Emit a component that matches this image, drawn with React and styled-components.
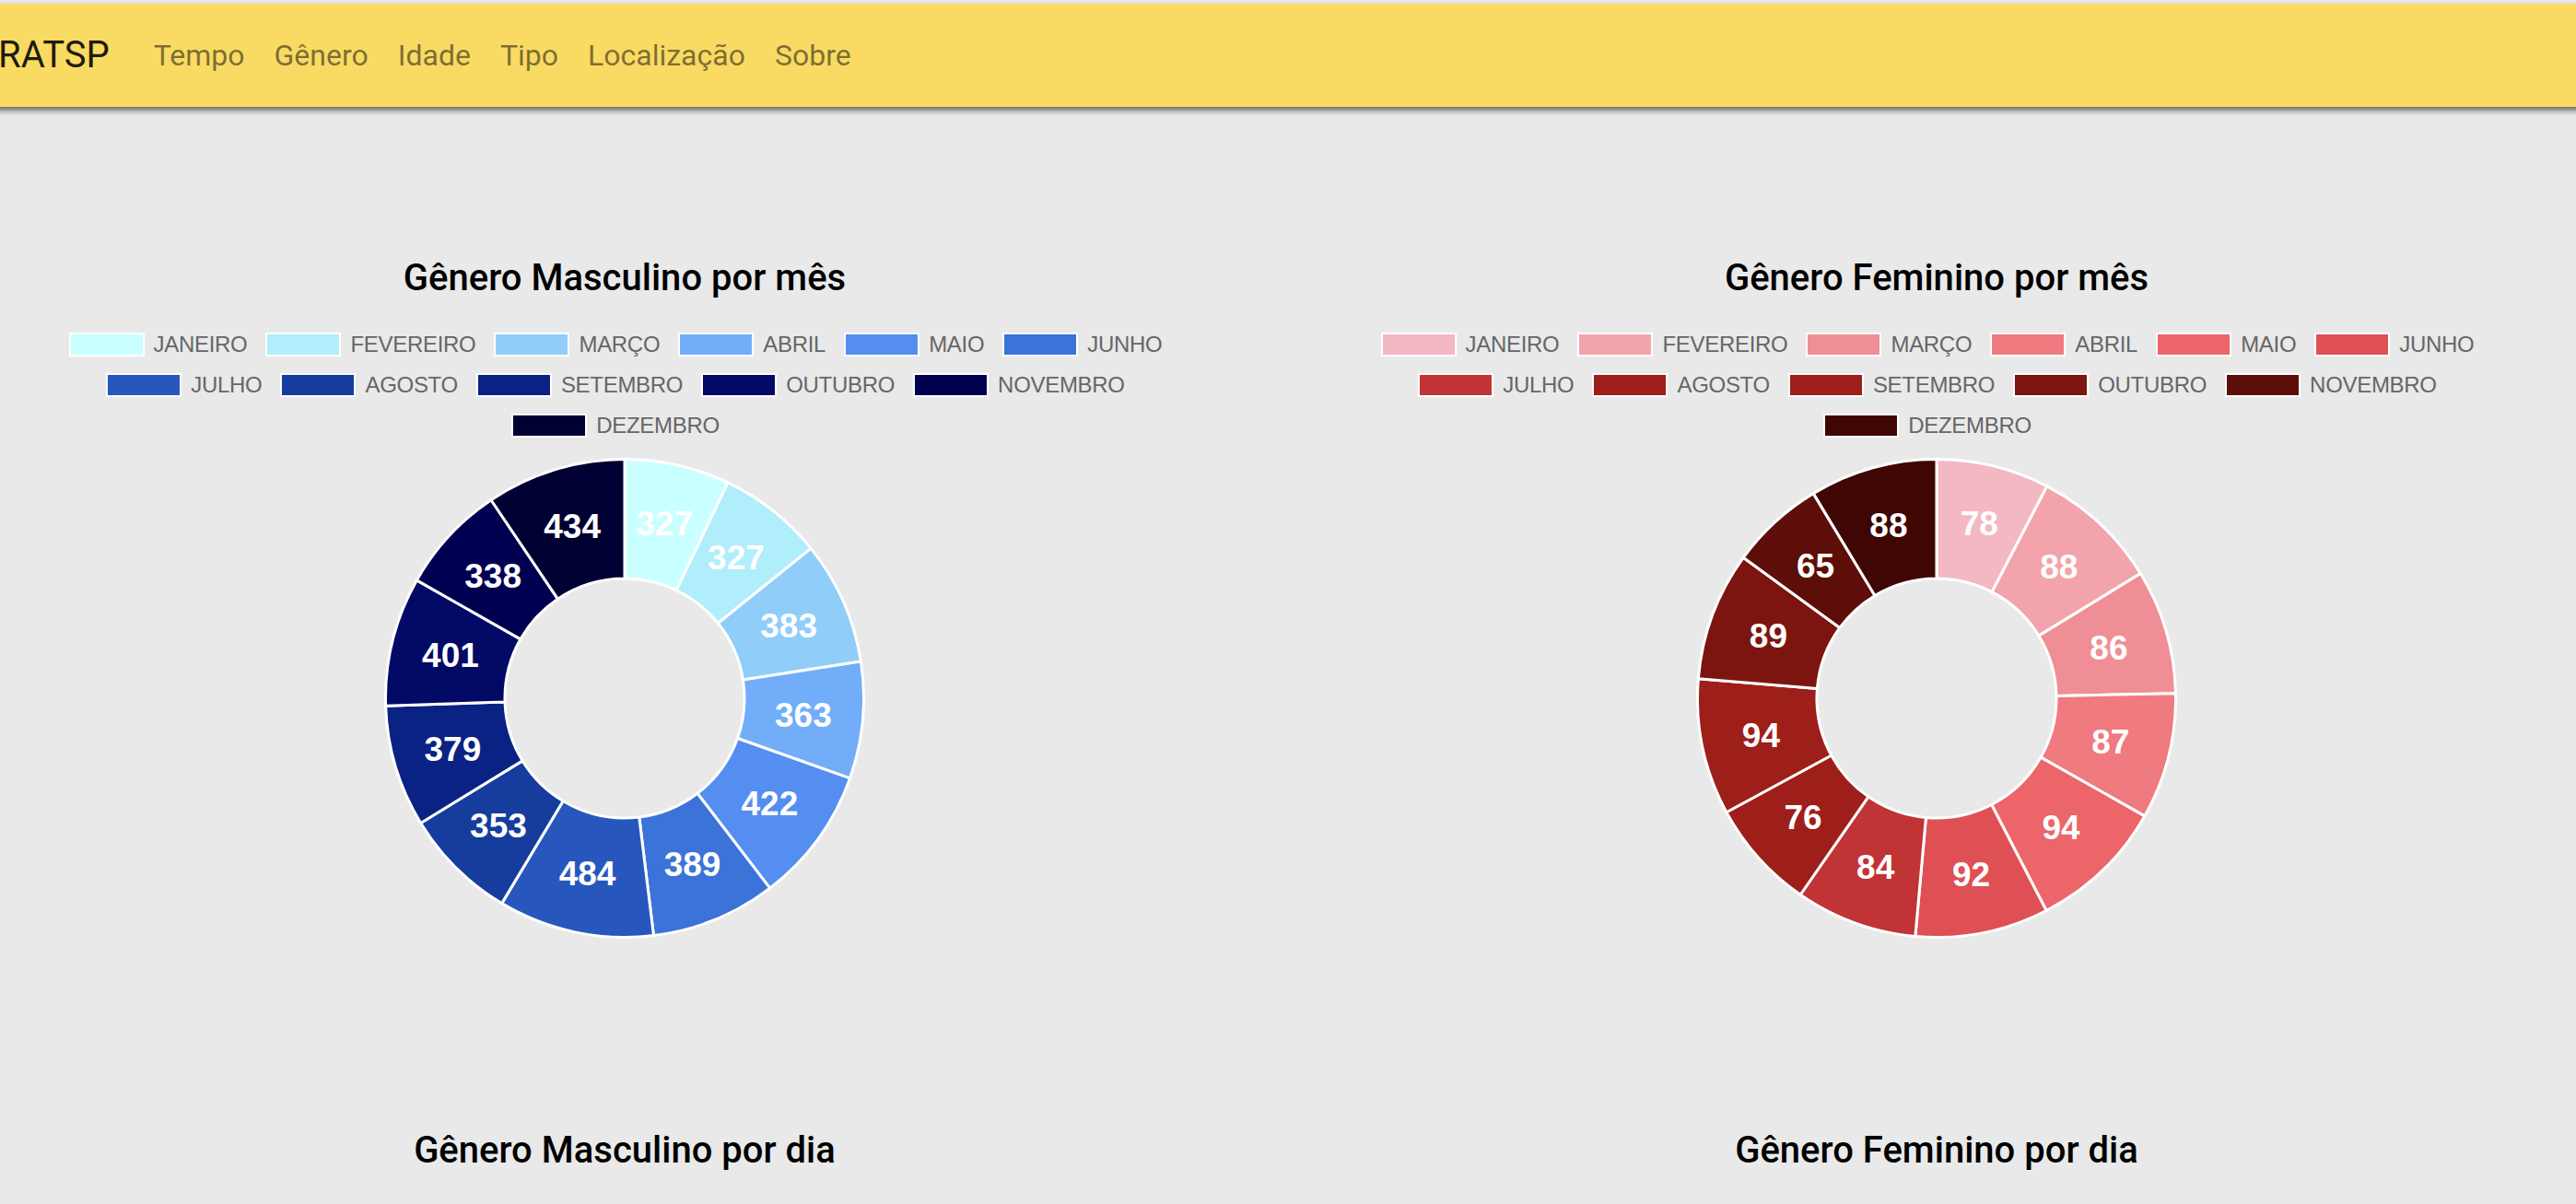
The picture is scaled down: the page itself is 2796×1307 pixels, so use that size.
import React from "react";
import styled, { createGlobalStyle } from "styled-components";

const MONTHS = [
  "JANEIRO",
  "FEVEREIRO",
  "MARÇO",
  "ABRIL",
  "MAIO",
  "JUNHO",
  "JULHO",
  "AGOSTO",
  "SETEMBRO",
  "OUTUBRO",
  "NOVEMBRO",
  "DEZEMBRO",
];

const DAYS = ["DOMINGO", "SEGUNDA", "TERÇA", "QUARTA", "QUINTA", "SEXTA", "SÁBADO"];

const maleByMonth = [327, 327, 383, 363, 422, 389, 484, 353, 379, 401, 338, 434];
const femaleByMonth = [78, 88, 86, 87, 94, 92, 84, 76, 94, 89, 65, 88];

const BLUES = [
  "#caffff",
  "#b0eefb",
  "#90cdf9",
  "#72adf9",
  "#548ef0",
  "#3b73d8",
  "#2757bd",
  "#163c9e",
  "#0a2284",
  "#020a66",
  "#010050",
  "#000033",
];

const REDS = [
  "#f4b8c3",
  "#f3a3ab",
  "#ef8f95",
  "#ef7a80",
  "#ec6569",
  "#df5055",
  "#c03435",
  "#9e1e1a",
  "#9e1e1a",
  "#7c150f",
  "#5e0e08",
  "#3f0604",
];

const NAV_LINKS = ["Tempo", "Gênero", "Idade", "Tipo", "Localização", "Sobre"];

function arcPath(cx, cy, r0, r1, a0, a1) {
  const large = a1 - a0 > Math.PI ? 1 : 0;
  const pt = (r, a) => `${cx + r * Math.cos(a)} ${cy + r * Math.sin(a)}`;
  return `M${pt(r1, a0)} A${r1} ${r1} 0 ${large} 1 ${pt(r1, a1)} L${pt(r0, a1)} A${r0} ${r0} 0 ${large} 0 ${pt(r0, a0)} Z`;
}

function Donut({ values, colors }) {
  const size = 526;
  const c = size / 2;
  const outer = 259.5;
  const inner = 130;
  const total = values.reduce((a, b) => a + b, 0);
  let acc = 0;
  const slices = values.map((v, i) => {
    const a0 = -Math.PI / 2 + (acc / total) * Math.PI * 2;
    acc += v;
    const a1 = -Math.PI / 2 + (acc / total) * Math.PI * 2;
    const mid = (a0 + a1) / 2;
    const rm = (inner + outer) / 2;
    return {
      d: arcPath(c, c, inner, outer, a0, a1),
      color: colors[i],
      x: c + rm * Math.cos(mid),
      y: c + rm * Math.sin(mid),
      v,
    };
  });

  return (
    <ChartSvg width={size} height={size} viewBox={`0 0 ${size} ${size}`}>
      {slices.map((s, i) => (
        <path key={i} d={s.d} fill={s.color} stroke="#fff" strokeWidth="3" strokeLinejoin="round" />
      ))}
      {slices.map((s, i) => (
        <SliceLabel key={i} x={s.x} y={s.y} textAnchor="middle" dominantBaseline="central">
          {s.v}
        </SliceLabel>
      ))}
    </ChartSvg>
  );
}

function Legend({ labels, colors }) {
  return (
    <StLegend>
      {labels.map((label, i) => (
        <StLegendItem key={label}>
          <StLegendBox $color={colors[i]} />
          <span>{label}</span>
        </StLegendItem>
      ))}
    </StLegend>
  );
}

function ChartCard({ title, labels, colors, values }) {
  return (
    <StCard>
      <StTitle>{title}</StTitle>
      <Legend labels={labels} colors={colors} />
      {values && <Donut values={values} colors={colors} />}
    </StCard>
  );
}

export default function App() {
  return (
    <>
      <GlobalStyle />
      <StPage>
        <StNavbar>
          <StBrand>RATSP</StBrand>
          <StNav>
            {NAV_LINKS.map((link) => (
              <StNavLink key={link} href="#">
                {link}
              </StNavLink>
            ))}
          </StNav>
        </StNavbar>
        <StMain>
          <StGrid>
            <ChartCard
              title="Gênero Masculino por mês"
              labels={MONTHS}
              colors={BLUES}
              values={maleByMonth}
            />
            <ChartCard
              title="Gênero Feminino por mês"
              labels={MONTHS}
              colors={REDS}
              values={femaleByMonth}
            />
            <ChartCard
              title="Gênero Masculino por dia"
              labels={DAYS}
              colors={BLUES.filter((_, i) => i % 2 === 0).concat(BLUES[11])}
            />
            <ChartCard
              title="Gênero Feminino por dia"
              labels={DAYS}
              colors={REDS.filter((_, i) => i % 2 === 0).concat(REDS[11])}
            />
          </StGrid>
        </StMain>
      </StPage>
    </>
  );
}

//styled-components
const GlobalStyle = createGlobalStyle`
  html, body {
    margin: 0;
    padding: 0;
    background: #e9e9e9;
    overflow: hidden;
  }
  body {
    font-family: Roboto, "Noto Sans", sans-serif;
  }
  * {
    box-sizing: border-box;
  }
`;

const StPage = styled.div`
  width: 2848px;
  margin-left: -34px;
  padding-top: 4px;
`;

const StNavbar = styled.nav`
  height: 112px;
  padding: 0 32px;
  display: flex;
  align-items: center;
  background: #f9da63;
  box-shadow: 0 4px 6px rgba(0, 0, 0, 0.55);
  position: relative;
  z-index: 1;
`;

const StBrand = styled.a`
  font-size: 40px;
  color: rgba(0, 0, 0, 0.9);
  margin-right: 32px;
  line-height: 60px;
`;

const StNav = styled.div`
  display: flex;
`;

const StNavLink = styled.a`
  font-size: 32px;
  color: rgba(0, 0, 0, 0.5);
  text-decoration: none;
  padding: 0 16px;
  line-height: 48px;
`;

const StMain = styled.main`
  padding-top: 162px;
`;

const StGrid = styled.div`
  display: grid;
  grid-template-columns: 1424px 1424px;
`;

const StCard = styled.section`
  display: flex;
  flex-direction: column;
  align-items: center;
  padding: 0 30px;
  margin-bottom: 204px;
`;

const StTitle = styled.h5`
  margin: 0 0 26px;
  font-size: 40px;
  font-weight: 500;
  line-height: 48px;
  color: #000;
`;

const StLegend = styled.div`
  display: flex;
  flex-wrap: wrap;
  justify-content: center;
  width: 100%;
  margin-bottom: 11px;
  font-family: "Liberation Sans", Arial, sans-serif;
  font-size: 24px;
  letter-spacing: -0.3px;
  color: #666;
`;

const StLegendItem = styled.div`
  display: flex;
  align-items: center;
  height: 44px;
  margin-right: 20px;
  white-space: nowrap;
`;

const StLegendBox = styled.span`
  width: 82px;
  height: 26px;
  margin-right: 10px;
  background: ${(p) => p.$color};
  border: 2px solid #fff;
`;

const ChartSvg = styled.svg`
  display: block;
`;

const SliceLabel = styled.text`
  font-family: "Liberation Sans", Arial, sans-serif;
  font-weight: bold;
  font-size: 37px;
  fill: #fff;
`;
